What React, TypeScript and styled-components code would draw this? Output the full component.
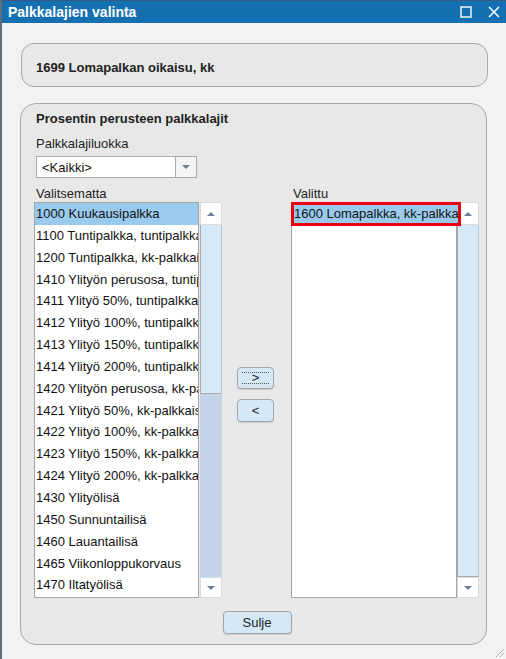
import React from 'react';
import styled, { createGlobalStyle } from 'styled-components';

const Global = createGlobalStyle`
  html, body { margin: 0; padding: 0; background: #f2f2f2; }
  body { font-family: "Liberation Sans", Arial, sans-serif; font-size: 13px; color: #1b1b1b; }
  * { box-sizing: border-box; }
`;

const Window = styled.div`
  width: 506px;
  height: 659px;
  border-left: 2px solid #5f6d7e;
  background: #f2f2f2;
  display: flex;
  flex-direction: column;
  position: relative;
  overflow: hidden;
`;

const TitleBar = styled.div`
  height: 23px;
  flex: none;
  background: #1470b0;
  border-top: 1px solid #355a84;
  display: flex;
  align-items: center;
  padding: 0 6px 0 6px;
  color: #fff;
`;

const TitleText = styled.div`
  font-weight: bold;
  font-size: 14px;
  flex: 1;
`;

const TitleButtons = styled.div`
  display: flex;
  align-items: center;
  gap: 16px;
`;

const Body = styled.div`
  display: flex;
  flex-direction: column;
  padding-left: 18px;
`;

const HeaderPanel = styled.div`
  width: 467px;
  height: 44px;
  margin: 20px 0 0 1px;
  border: 1px solid #a9a9a9;
  border-radius: 13px;
  background: #e8e8e8;
  display: flex;
  align-items: center;
  padding: 5px 0 0 14px;
  font-weight: bold;
  color: #222;
`;

const MainPanel = styled.div`
  width: 467px;
  height: 542px;
  margin-top: 16px;
  border: 1px solid #a9a9a9;
  border-radius: 16px;
  background: #e8e8e8;
  display: flex;
  flex-direction: column;
  padding: 7px 0 0 13px;
`;

const PanelTitle = styled.div`
  font-weight: bold;
  line-height: 16px;
  padding-left: 2px;
  color: #1e1e1e;
`;

const FieldLabel = styled.div<{ $top?: number; $left?: number }>`
  line-height: 16px;
  margin-top: ${(p) => p.$top ?? 0}px;
  padding-left: ${(p) => p.$left ?? 2}px;
  color: #1e1e1e;
`;

const SelectWrap = styled.div`
  display: flex;
  width: 161px;
  height: 22px;
  margin: 4px 0 0 2px;
`;

const SelectBox = styled.div`
  flex: 1;
  background: #fff;
  border: 1px solid #ababab;
  border-right: none;
  display: flex;
  align-items: center;
  padding-left: 5px;
  color: #111;
`;

const SelectButton = styled.div`
  width: 22px;
  background: #f4f4f4;
  border: 1px solid #ababab;
  display: flex;
  align-items: center;
  justify-content: center;
`;

const Arrow = styled.span<{ $up?: boolean }>`
  width: 0;
  height: 0;
  border-left: 4px solid transparent;
  border-right: 4px solid transparent;
  ${(p) => (p.$up ? 'border-bottom: 4px solid #6e7e94;' : 'border-top: 4px solid #6e7e94;')}
`;

const Lists = styled.div`
  display: grid;
  grid-template-columns: 188px 69px 188px;
  grid-template-rows: 16px 396px;
  margin-top: 8px;
`;

const ListWidget = styled.div`
  display: flex;
  height: 396px;
`;

const ListBox = styled.div<{ $w: number }>`
  width: ${(p) => p.$w}px;
  height: 396px;
  background: #fff;
  border: 1px solid #a5a5a5;
  display: flex;
  flex-direction: column;
`;

const ListClip = styled.div`
  overflow: hidden;
  flex: 1;
`;

const Row = styled.div<{ $sel?: boolean }>`
  height: 21.85px;
  line-height: 21.85px;
  padding-left: 1px;
  white-space: nowrap;
  overflow: hidden;
  color: #111;
  background: ${(p) => (p.$sel ? '#9bcaef' : 'transparent')};
`;

const FocusRow = styled.div`
  position: relative;
  z-index: 2;
  height: 24px;
  width: calc(100% + 6px);
  margin: -1px 0 0 -1px;
  border: 3px solid #ea0010;
  background: #9bcaef;
  line-height: 18px;
  padding-left: 0px;
  white-space: nowrap;
  overflow: hidden;
  color: #111;
`;

const ScrollBar = styled.div<{ $gap: number }>`
  width: 22px;
  margin-left: ${(p) => p.$gap}px;
  display: flex;
  flex-direction: column;
`;

const ScrollButton = styled.div<{ $h: number }>`
  height: ${(p) => p.$h}px;
  background: #fff;
  border: 1px solid #dadada;
  display: flex;
  align-items: center;
  justify-content: center;
`;

const Track = styled.div`
  flex: 1;
  background: #c3d3e8;
  display: flex;
  flex-direction: column;
`;

const Thumb = styled.div<{ $h?: number }>`
  height: ${(p) => (p.$h ? `${p.$h}px` : '100%')};
  background: #d5e9f9;
  border-left: 1px solid #a9a9a9;
  border-right: 1px solid #b9c6d6;
  border-bottom: 1px solid #a9a9a9;
`;

const Middle = styled.div`
  display: flex;
  flex-direction: column;
  align-items: center;
  justify-content: center;
  gap: 10px;
  padding: 0 2px 12px 0;
`;

const SmallButton = styled.div<{ $w: number; $h: number }>`
  width: ${(p) => p.$w}px;
  height: ${(p) => p.$h}px;
  background: #d4e8f8;
  border: 1px solid #a4a4a4;
  border-radius: 4px;
  box-shadow: 0 1px 1px rgba(0, 0, 0, 0.12);
  display: flex;
  align-items: center;
  justify-content: center;
  color: #222;
  font-size: 13px;
`;

const FocusRect = styled.span`
  width: 27px;
  height: 12px;
  border-top: 1px dotted #555;
  border-bottom: 1px dotted #555;
  display: flex;
  align-items: center;
  justify-content: center;
  line-height: 10px;
`;

const Footer = styled.div`
  width: 445px;
  display: flex;
  justify-content: center;
  margin-top: 13px;
  padding-left: 1px;
`;

const Grip = styled.svg`
  position: absolute;
  right: 1px;
  bottom: 1px;
`;

const leftItems = [
  '1000 Kuukausipalkka',
  '1100 Tuntipalkka, tuntipalkkaiset',
  '1200 Tuntipalkka, kk-palkkaiset',
  '1410 Ylityön perusosa, tuntipalkkaiset',
  '1411 Ylityö 50%, tuntipalkkaiset',
  '1412 Ylityö 100%, tuntipalkkaiset',
  '1413 Ylityö 150%, tuntipalkkaiset',
  '1414 Ylityö 200%, tuntipalkkaiset',
  '1420 Ylityön perusosa, kk-palkkaiset',
  '1421 Ylityö 50%, kk-palkkaiset',
  '1422 Ylityö 100%, kk-palkkaiset',
  '1423 Ylityö 150%, kk-palkkaiset',
  '1424 Ylityö 200%, kk-palkkaiset',
  '1430 Ylityölisä',
  '1450 Sunnuntailisä',
  '1460 Lauantailisä',
  '1465 Viikonloppukorvaus',
  '1470 Iltatyölisä',
];

export default function App() {
  return (
    <>
      <Global />
      <Window>
        <TitleBar>
          <TitleText>Palkkalajien valinta</TitleText>
          <TitleButtons>
            <svg width="12" height="12" viewBox="0 0 12 12">
              <rect x="1" y="1" width="10" height="10" fill="none" stroke="#fff" strokeWidth="1.4" />
            </svg>
            <svg width="12" height="12" viewBox="0 0 12 12">
              <path d="M1 1 L11 11 M11 1 L1 11" stroke="#fff" strokeWidth="1.5" />
            </svg>
          </TitleButtons>
        </TitleBar>
        <Body>
          <HeaderPanel>1699 Lomapalkan oikaisu, kk</HeaderPanel>
          <MainPanel>
            <PanelTitle>Prosentin perusteen palkkalajit</PanelTitle>
            <FieldLabel $top={9}>Palkkalajiluokka</FieldLabel>
            <SelectWrap>
              <SelectBox>&lt;Kaikki&gt;</SelectBox>
              <SelectButton>
                <Arrow />
              </SelectButton>
            </SelectWrap>
            <Lists>
              <FieldLabel>Valitsematta</FieldLabel>
              <div />
              <FieldLabel>Valittu</FieldLabel>
              <ListWidget>
                <ListBox $w={165}>
                  <ListClip>
                    {leftItems.map((t, i) => (
                      <Row key={t} $sel={i === 0}>
                        {t}
                      </Row>
                    ))}
                  </ListClip>
                </ListBox>
                <ScrollBar $gap={1}>
                  <ScrollButton $h={23}>
                    <Arrow $up />
                  </ScrollButton>
                  <Track>
                    <Thumb $h={169} />
                  </Track>
                  <ScrollButton $h={21}>
                    <Arrow />
                  </ScrollButton>
                </ScrollBar>
              </ListWidget>
              <Middle>
                <SmallButton $w={37} $h={22}>
                  <FocusRect>&gt;</FocusRect>
                </SmallButton>
                <SmallButton $w={37} $h={23}>&lt;</SmallButton>
              </Middle>
              <ListWidget>
                <ListBox $w={166}>
                  <FocusRow>1600 Lomapalkka, kk-palkkaiset</FocusRow>
                </ListBox>
                <ScrollBar $gap={0}>
                  <ScrollButton $h={23}>
                    <Arrow $up />
                  </ScrollButton>
                  <Track>
                    <Thumb />
                  </Track>
                  <ScrollButton $h={21}>
                    <Arrow />
                  </ScrollButton>
                </ScrollBar>
              </ListWidget>
            </Lists>
            <Footer>
              <SmallButton $w={69} $h={23}>Sulje</SmallButton>
            </Footer>
          </MainPanel>
        </Body>
        <Grip width="12" height="12" viewBox="0 0 12 12">
          <path d="M11 3 L3 11 M11 7 L7 11" stroke="#b0b0b0" strokeWidth="1" />
        </Grip>
      </Window>
    </>
  );
}
